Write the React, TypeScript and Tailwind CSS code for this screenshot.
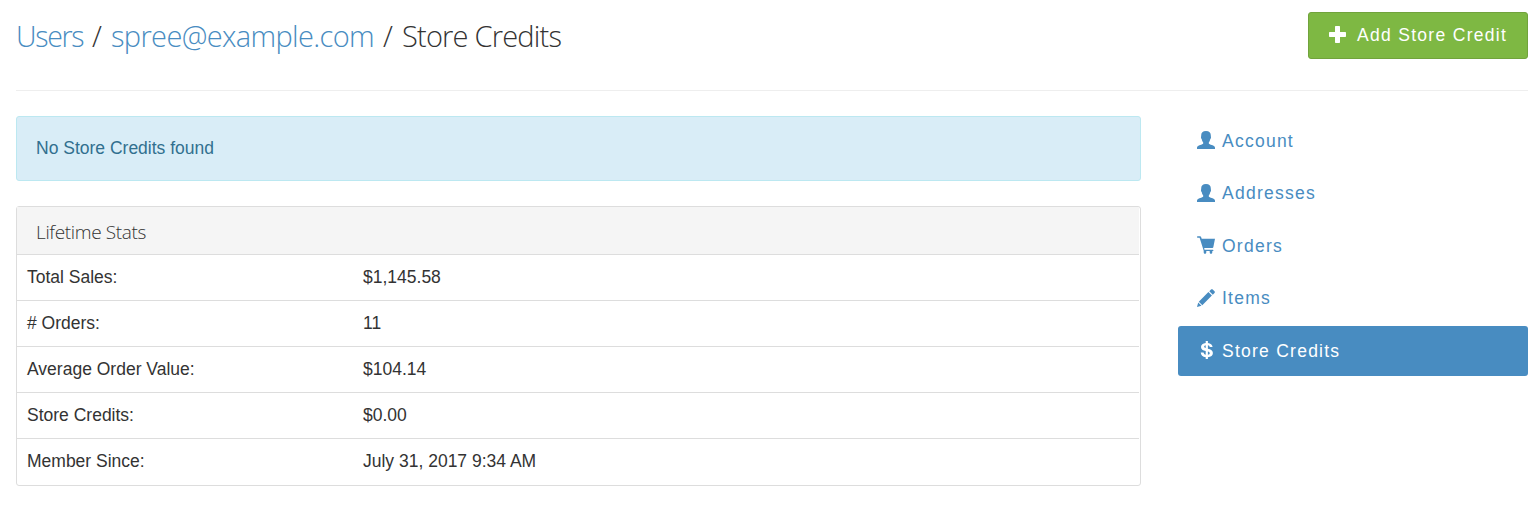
import React from "react";

type IconName = "user" | "cart" | "pencil" | "dollar";

const stats: [string, string][] = [
  ["Total Sales:", "$1,145.58"],
  ["# Orders:", "11"],
  ["Average Order Value:", "$104.14"],
  ["Store Credits:", "$0.00"],
  ["Member Since:", "July 31, 2017 9:34 AM"],
];

const links: { label: string; icon: IconName; active?: boolean }[] = [
  { label: "Account", icon: "user" },
  { label: "Addresses", icon: "user" },
  { label: "Orders", icon: "cart" },
  { label: "Items", icon: "pencil" },
  { label: "Store Credits", icon: "dollar", active: true },
];

function Icon({ name }: { name: IconName }) {
  return (
    <svg className="mb-[2px] h-[18px] w-[18px] shrink-0" viewBox="0 0 18 18" fill="currentColor">
      {name === "user" && (
        <path d="M9 0C5.700 0 4.200 1.700 4.200 4.300c0 1-.2 1.300-.2 2.200 0 .9.400 1.300.7 1.600.3 1.500.8 2.500 1.500 3.300v1c-.4.700-1.500.9-3 1.600C1.100 14.900 0 15.400 0 16.700V18h18v-1.300c0-1.300-1.100-1.800-3.200-2.700-1.500-.7-2.600-.9-3-1.600v-1c.7-.8 1.200-1.800 1.500-3.300.3-.3.7-.7.7-1.600 0-.9-.2-1.200-.2-2.200C13.800 1.700 12.300 0 9 0z" />
      )}
      {name === "cart" && (
        <path d="M.6.3h2.500c.5 0 .8.200 1 .7l.6 1.700H18l-1.700 8.500c-.1.500-.4.800-.9.800H7.200l.3 1.700h8.300c.8 0 .8 1.400 0 1.400h-.5v1.200c0 2-2.600 2-2.600 0v-1.200H9.300v1.200c0 2-2.600 2-2.600 0v-1.500L2.600 1.800h-2C-.2 1.800-.2.3.6.300z" />
      )}
      {name === "pencil" && (
        <path d="M14 .6c.5-.6 1.200-.6 1.700-.1l1.800 1.800c.5.500.5 1.200 0 1.700l-1.700 1.700-3.500-3.500zM11.400 3.100l3.500 3.500-9.600 9.600-3.500-3.500zM1.200 13.500l3.300 3.300L0 18z" />
      )}
      {name === "dollar" && (
        <path d="M8.700 0h2.200v1.900c2.600.3 4.500 1.700 4.700 4.200h-2.800c-.2-1-.8-1.600-1.900-1.800v3.400c3 .7 5 1.700 5 4.300 0 2.400-1.900 3.900-5 4.200V18H8.700v-1.800C5.600 15.900 3.900 14.300 3.700 11.600h2.900c.2 1.300.9 2 2.100 2.200V9.900c-2.800-.7-4.700-1.600-4.700-4 0-2.300 1.900-3.700 4.700-4zM8.700 4.200c-2.100.4-2.100 2.300 0 2.900zm2.200 9.600c2.500-.4 2.500-2.700 0-3.300z" />
      )}
    </svg>
  );
}

export default function App() {
  return (
    <div className="h-[524px] w-full overflow-hidden bg-white pl-4 pr-[10px] pt-3 font-['Liberation_Sans',Arial,sans-serif] text-[17.5px] leading-[25px] text-[#333]">
      <header className="flex h-[79px] items-start justify-between border-b border-[#eee]">
        <h1 className="flex h-12 items-center whitespace-nowrap font-['Open_Sans',sans-serif] text-[29px] font-light leading-[48px]">
          <a className="w-[76px] text-[28.5px] tracking-[-1.3px] text-[#488cc1]">Users</a>
          <span className="w-[19px]">/</span>
          <a className="w-[272px] tracking-[-0.65px] text-[#488cc1]">spree@example.com</a>
          <span className="w-[19px]">/</span>
          <span className="tracking-[-0.8px]">Store Credits</span>
        </h1>
        <button className="flex h-[47px] w-[220px] items-center rounded-[3px] border border-[#71a33c] bg-[#7eb843] pl-[20px] text-[17.5px] tracking-[1.3px] text-white">
          <svg className="mb-[2px] mr-[11px] h-[17px] w-[17px] shrink-0" viewBox="0 0 17 17" fill="currentColor">
            <path d="M6.700 0h3.600q.7 0 .7.700V6h5.300q.7 0 .7.700v3.600q0 .7-.7.700H11v5.300q0 .7-.7.700H6.700q-.7 0-.7-.7V11H.7q-.7 0-.7-.7V6.700Q0 6 .7 6H6V.700Q6 0 6.700 0z" />
          </svg>
          <span className="whitespace-nowrap">Add Store Credit</span>
        </button>
      </header>
      <div className="mt-[25px] flex items-start justify-between">
        <main className="w-[1125px]">
          <div className="flex h-[65px] items-center rounded-[3px] border border-[#bce8f1] bg-[#d9edf7] pl-[19px] text-[#31708f]">
            No Store Credits found
          </div>
          <section className="mt-[25px] h-[280px] rounded-[3px] border border-[#ddd]">
            <h2 className="mr-px flex h-[47px] items-center bg-[#f5f5f5] pl-[19px] pt-[3px] font-['Open_Sans',sans-serif] text-[19px] font-light tracking-[-0.35px]">
              Lifetime Stats
            </h2>
            <dl className="mr-px">
              {stats.map(([label, value]) => (
                <div key={label} className="flex h-[46px] items-center border-t border-[#ddd] pl-[10px]">
                  <dt className="w-[336px]">{label}</dt>
                  <dd>{value}</dd>
                </div>
              ))}
            </dl>
          </section>
        </main>
        <nav className="flex w-[350px] flex-col gap-[2.5px] text-[17.5px] tracking-[1.25px]">
          {links.map(({ label, icon, active }) => (
            <a
              key={label}
              className={
                active
                  ? "flex h-[50px] items-center gap-[7px] rounded-[3px] bg-[#488cc1] pl-[19px] text-white"
                  : "flex h-[50px] items-center gap-[7px] pl-[19px] text-[#488cc1]"
              }
            >
              <Icon name={icon} />
              <span>{label}</span>
            </a>
          ))}
        </nav>
      </div>
    </div>
  );
}
